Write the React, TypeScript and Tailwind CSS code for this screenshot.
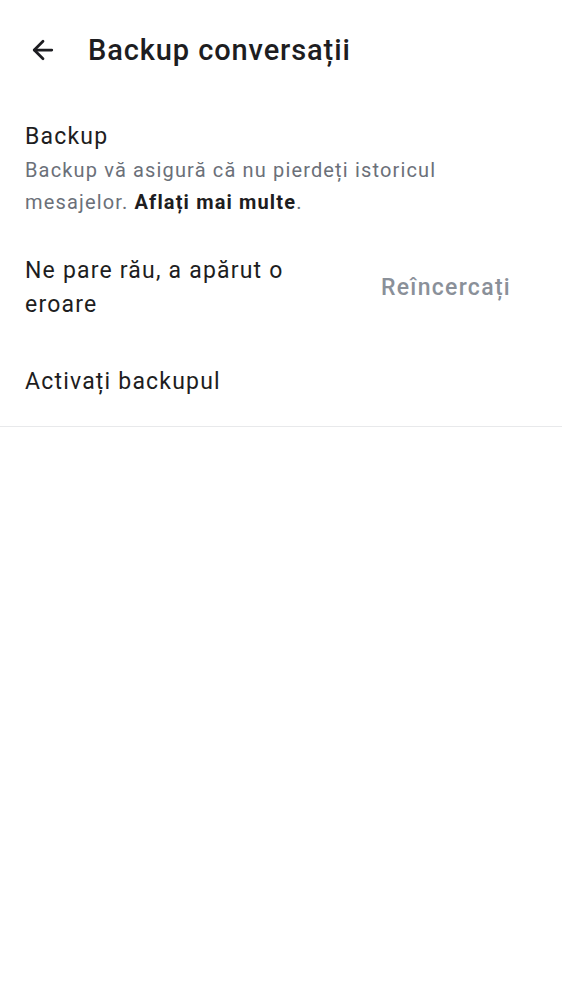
import { ArrowLeft } from "lucide-react";

export default function App() {
  return (
    <div
      className="min-h-screen w-full bg-white text-[#1d1d21]"
      style={{ fontFamily: "Roboto, 'Noto Sans', sans-serif" }}
    >
      {/* header */}
      <div className="flex h-[100px] items-center gap-[30px] px-[28px]">
        <ArrowLeft className="h-[30px] w-[30px]" strokeWidth={2.2} />
        <h1 className="text-[29px] font-medium leading-none tracking-[0.9px]">Backup conversații</h1>
      </div>

      {/* backup info */}
      <div className="pl-[25px] pr-[25px] pt-[20px]">
        <div className="text-[23px] leading-[34px] tracking-[1.2px]">Backup</div>
        <p className="w-[445px] text-[20px] leading-[32px] tracking-[1.15px] text-[#6b7079]">
          Backup vă asigură că nu pierdeți istoricul mesajelor.{" "}
          <span className="font-bold text-[#1d1d21]">Aflați mai multe</span>.
        </p>
      </div>

      {/* error row */}
      <div className="flex items-center justify-between pl-[25px] pr-[51px] pt-[36px]">
        <div className="w-[300px] text-[23px] leading-[34px] tracking-[1.2px]">Ne pare rău, a apărut o eroare</div>
        <button className="text-[23px] font-medium tracking-[1.3px] text-[#8a9099]">Reîncercați</button>
      </div>

      {/* activate */}
      <div className="border-b border-[#e8e9eb] px-[25px] pt-[43px] pb-[27px]">
        <div className="text-[23px] leading-[34px] tracking-[1.2px]">Activați backupul</div>
      </div>
    </div>
  );
}
